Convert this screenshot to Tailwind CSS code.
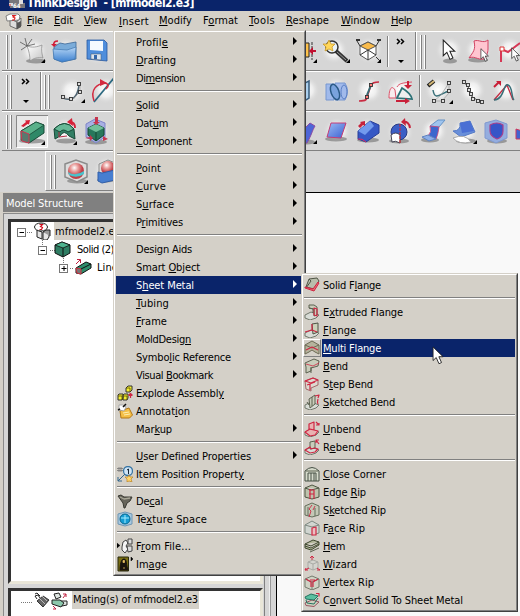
<!DOCTYPE html>
<html lang="en">
<head>
<meta charset="utf-8">
<title>ThinkDesign - [mfmodel2.e3]</title>
<script src="https://cdn.jsdelivr.net/npm/@tailwindcss/browser@4"></script>
</head>
<body class="overflow-hidden">
<svg class="absolute w-0 h-0" aria-hidden="true">
  <defs>
    <radialGradient id="glow"><stop offset="0" stop-color="#fff"/><stop offset=".5" stop-color="#f4f4f4" stop-opacity=".8"/><stop offset="1" stop-color="#d6d6d6" stop-opacity="0"/></radialGradient>
    <linearGradient id="blue" x1="0" y1="0" x2="1" y2="1"><stop offset="0" stop-color="#9cbcf4"/><stop offset="1" stop-color="#3b5fd0"/></linearGradient>
    <linearGradient id="folder" x1="0" y1="0" x2="0" y2="1"><stop offset="0" stop-color="#b5d5f5"/><stop offset="1" stop-color="#3b80d0"/></linearGradient>
    <radialGradient id="ball" cx=".4" cy=".3"><stop offset="0" stop-color="#fff"/><stop offset=".5" stop-color="#e89a98"/><stop offset="1" stop-color="#c04048"/></radialGradient>
    <linearGradient id="paper" x1="0" y1="0" x2="1" y2="1"><stop offset="0" stop-color="#fff"/><stop offset="1" stop-color="#c4c4c4"/></linearGradient>
    <symbol id="pointer" viewBox="0 0 14 22"><path d="M1 1V16L4.5 12.700L7.500 19.500L10.300 18.200L7.400 11.800H12Z" fill="#fff" stroke="#222" stroke-width="1"/></symbol>
  </defs>
</svg>
<div class="relative w-[520px] h-[616px] overflow-hidden flex flex-col bg-[#d4d0c8] text-[11px] leading-[20px] text-black whitespace-nowrap font-['DejaVu_Sans_Condensed','DejaVu_Sans',sans-serif]">

  <header class="h-[11px] shrink-0 bg-[#0a246a] overflow-hidden flex items-start pl-[8px]">
    <svg class="w-[18px] h-[11px] shrink-0" viewBox="8 0 18 11"><path d="M9 0h11v3h5v5h-15z" fill="#77777b"/><path d="M9 3h4v3H9zM19 0h4v4h-4z" fill="#ddd"/><path d="M10 4v2" stroke="#d33"/><text x="13" y="8" font-size="6" font-weight="bold" fill="#fff">64</text></svg>
    <b class="pl-px text-white text-[12px] leading-[14px] -mt-[4px]"><span data-w="166" data-bold>ThinkDesign&nbsp; - [mfmodel2.e3]</span></b>
  </header>

  <nav class="h-[20px] shrink-0 flex items-start" id="menubar">
    <svg class="w-[22px] h-[20px] ml-[5px] shrink-0" viewBox="5 11 22 20"><path d="M10 19l7 3v7l-7-3zM17 21l4-3v8l-4 3z" fill="#ddd" stroke="#555" stroke-width=".8"/><path d="M6 16l4-2h8l2 2-1 4-12 1z" fill="#fff" stroke="#666" stroke-width=".8"/><path d="M12 15.500h3l-2 1.500 2 1-1 2h-2" fill="none" stroke="#d22" stroke-width="1.200"/><path d="M17 23l4-2v6l-4 2z" fill="#555"/></svg>
  </nav>

  <div class="h-[161px] shrink-0 flex flex-col border-t border-t-white pl-[2px] bg-[#d6d6d6]" id="toolbars"></div>

  <main class="flex-1 flex min-h-0">
    <aside class="w-[264px] shrink-0 flex flex-col pt-px pl-[3px] bg-[#d4d0c8]">
      <h2 class="h-[19px] shrink-0 bg-[#808080] text-white pl-[3px] leading-[21px]"><span data-w="76">Model Structure</span></h2>
      <div class="mt-px flex-1 min-h-0 flex flex-col border-l border-t border-[#8a8a8a] pl-[4px] pt-[5px] bg-[#d6d6d6]">
        <section class="h-[365px] shrink-0 w-[255px] border-[3px] border-t-[#333] border-l-[#333] border-r-[#e9e6d8] border-b-[#e9e6d8] bg-white overflow-hidden">
          <div class="flex h-[18px]"><svg class="w-[43px] h-[18px] shrink-0" viewBox="11 222 43 18"><rect x="17.500" y="228.500" width="8" height="8" fill="#fff" stroke="#777"/><path d="M19.500 232.500h4.500" stroke="#000"/><path d="M27 232.500h6" stroke="#777" stroke-dasharray="1 1"/><path d="M37 230l5 2v7l-5-2zM43 232h6v5l-2 3h-4z" fill="#e6e6e6" stroke="#222"/><path d="M43 232l3-2h4v6" fill="#999" stroke="#222"/><ellipse cx="41" cy="227" rx="6.500" ry="4" fill="#fff" stroke="#222"/><path d="M39.500 224.500h3l-2 2 2 1-1 2h-2" stroke="#d01020" fill="none" stroke-width="1.200"/></svg><span class="bg-[#d4d0c8] pl-[1px] w-[70px]"><span data-w="65">mfmodel2.e3</span></span></div>
          <div class="flex h-[18px]"><svg class="w-[65px] h-[18px] shrink-0" viewBox="11 240 65 18"><path d="M42.500 240v6M50 250.500h5" stroke="#777" stroke-dasharray="1 1"/><rect x="38.500" y="246.500" width="8" height="8" fill="#fff" stroke="#777"/><path d="M40.500 250.500h4.500" stroke="#000"/><path d="M62 242l8 3v8l-7 4-8-4v-8z" fill="#2f7d63" stroke="#111"/><path d="M55 245l8 3 7-3-8-3z" fill="#4eb38f" stroke="#111" stroke-width=".8"/><path d="M63 248v9" stroke="#111"/></svg><span class="pl-[1px]"><span data-w="36">Solid (2)</span></span></div>
          <div class="flex h-[18px]"><svg class="w-[86px] h-[18px] shrink-0" viewBox="11 258 86 18"><path d="M63.500 258v6M70 268.500h4" stroke="#777" stroke-dasharray="1 1"/><rect x="59.500" y="264.500" width="8" height="8" fill="#fff" stroke="#777"/><path d="M61.500 268.500h5M64 266v5" stroke="#000"/><path d="M76 268l10-6 5 2v4l-10 6-5-1z" fill="#2f8c6b" stroke="#111"/><path d="M76 268l5 1v5l-4-1z" fill="#777" stroke="#d03040"/><path d="M81 269l10-5" stroke="#111"/><path d="M76 264l4-4M77 259.500h3.500V263" stroke="#c12040" fill="none"/></svg><span data-w="20">Line</span></div>
        </section>
        <section class="mt-[4px] h-[40px] shrink-0 w-[255px] border-[3px] border-b-0 border-t-[#333] border-l-[#333] border-r-[#e9e6d8] bg-white flex">
          <svg class="w-[61px] h-[22px] shrink-0" viewBox="11 590 61 22"><path d="M21 601.500h11" stroke="#777" stroke-dasharray="1 1"/><path d="M35 593l2-1 3 3M37 598l-2-3 3-1 2 3" stroke="#222" fill="none"/><path d="M37 600l6-5 6 4-6 7z" fill="#666" stroke="#333"/><path d="M39 597l6 6M42 595l5 5" stroke="#bbb"/><path d="M54 593l5-1 2 4-5 2zM61 600h6v4l-5 1z" fill="#dfe6e2" stroke="#222"/><path d="M52 599h8l4 3-3 4-9-3z" fill="#8bc8ac" stroke="#222"/><path d="M63 597l3-4m-3 0h3v3M56 608l-3-3m0 3h3" stroke="#c02040" fill="none"/></svg>
          <span class="bg-[#d4d0c8] h-[18px] leading-[18px] pl-[1px] w-[127px]"><span data-w="124">Mating(s) of mfmodel2.e3</span></span>
        </section>
      </div>
    </aside>
    <div class="w-[12px] shrink-0 bg-[#d6d6d6] border-l border-[#808080] flex"><i class="ml-[4px] w-[2px] bg-[#eee] border-r border-[#999]"></i></div>
    <div class="flex-1 border-t border-l border-black bg-[#f9f9f9]"></div>
  </main>

  <div role="menu" class="absolute left-[113px] top-[30px] w-[193px] h-[546px] bg-[#d4d0c8] border border-l-[#d4d0c8] border-t-[#d4d0c8] border-r-[#404040] border-b-[#404040]">
    <div class="h-full border border-l-white border-t-white border-r-[#808080] border-b-[#808080] px-px pt-px" id="insertItems"></div>
  </div>
  <div role="menu" class="absolute left-[301px] top-[273px] w-[217px] h-[339px] bg-[#d4d0c8] border border-l-[#d4d0c8] border-t-[#d4d0c8] border-r-[#404040] border-b-[#404040]">
    <div class="h-full border border-l-white border-t-white border-r-[#808080] border-b-[#808080] px-0 pt-px" id="sheetItems"></div>
  </div>
  <svg class="absolute left-[432px] top-[346px] w-[13px] h-[20px]" viewBox="0 0 14 22"><use href="#pointer" width="14" height="22"/></svg>
</div>

<script>
const mnemonic = t => t.replace(/&(.)/, '<u class="underline underline-offset-[1px] decoration-1">$1</u>');
const label = (t, w) => `<span data-w="${w}">${mnemonic(t)}</span>`;

// Menu bar: label, left edge, width
document.getElementById('menubar').insertAdjacentHTML('beforeend', [
  ['&File',27,15],['&Edit',54,18],['&View',84,22],['&Insert',119,29],['&Modify',159,32],['F&ormat',203,34],['&Tools',249,25],['&Reshape',286,42],['&Window',341,38],['&Help',391,20]
].map(([t,x,w],i,a) => {
  const next = a[i+1] ? a[i+1][1] : 520;
  return `<span class="shrink-0 ${t === '&Insert' ? 'pt-px' : 'pt-0'}" style="width:${next-x}px">${label(t,w)}</span>`;
}).join(''));

// Toolbars: every glyph is drawn in window coordinates, [left, width, markup]
const glow = (x,y,r=14) => `<circle cx="${x}" cy="${y}" r="${r}" fill="url(#glow)"/>`;
const tri = (x,y) => `<path d="M${x} ${y}v-4l-4 4z" fill="#000"/>`;
const grip = x => `<path d="M${x+.5} 3v34M${x+4.500} 3v34" stroke="#fff"/><path d="M${x+1.500} 3v34M${x+5.500} 3v34" stroke="#808080"/>`;
const more = x => `<path d="M${x} 7l2.500 2.500-2.500 2.500M${x+4} 7l2.500 2.500-2.500 2.500" stroke="#000" stroke-width="1.500" fill="none"/><path d="M${x+1} 28h6l-3 3z"/>`;
const end = (x, y0 = 0, y1 = 39) => `<path d="M${x+.5} ${y0}V${y1}" stroke="#808080"/><path d="M${x+1.500} ${y0}V${y1}" stroke="#fff"/>`;
const shadow = (x,y,w=10) => `<ellipse cx="${x}" cy="${y}" rx="${w}" ry="2.500" fill="#777" opacity=".65"/>`;
const square = (x,y,f='#ddd') => `<rect x="${x-1.500}" y="${y-1.500}" width="3" height="3" fill="${f}" stroke="#333" stroke-width=".9"/>`;
const rows = [
 [32, 38, [
  [2,16, grip(6)],
  [18,32, glow(34,19)+shadow(36,29)+'<path d="M27 14c5 2 10 1 15-1c-1 5 0 9 1 13c-5-1-9 0-13 3c0-5-1-10-3-15z" fill="url(#paper)" stroke="#888" stroke-width=".7"/><path d="M27 14l-7-4m7 4l-2-8m2 8l5-7m-5 7l-6 4m6-4l8-2" stroke="#555" stroke-width=".8"/>'+tri(45,31)],
  [50,32, glow(66,19)+'<path d="M54 15l6-4 5 1 11-2v17l-14 3-8-3z" fill="#7bacd9" stroke="#3c6795" stroke-width=".8"/><path d="M53 17l14 1 9-3-1 12-13 3-8-3z" fill="url(#folder)" stroke="#4077b0" stroke-width=".7"/><path d="M54 14c-1-4 1-5 4-5" fill="none" stroke="#d01c38" stroke-width="1.700"/><path d="M51 12l3 3 3-3z" fill="#d01c38"/>'],
  [82,31, glow(97,19)+'<path d="M87 8h17l3 3v18l-20-2z" fill="#4f8edc" stroke="#29589e" stroke-width=".8"/><path d="M90 9h13v10l-13-1z" fill="#f4faff"/><path d="M91 22h10v6l-10-1z" fill="#dce4ee" stroke="#456" stroke-width=".5"/><path d="M94 23h3v4h-3z" fill="#3567aa"/>'],
  [113,192,''],
  [305,15,'<path d="M302 11h7v14h-7z" fill="#ffc24a" stroke="#222"/><path d="M312 10v18" stroke="#333" stroke-dasharray="3 1"/><path d="M316 19h-5" stroke="#c01030" stroke-width="2"/><path d="M309 19l4-4v8z" fill="#c01030"/>'+tri(317,31)],
  [320,34, glow(334,18)+'<circle cx="332" cy="15" r="6" fill="#eaf3fa" stroke="#333" stroke-width="1.500"/><path d="M336 19l11 10" stroke="#333" stroke-width="4"/><path d="M337 20l9 8" stroke="#999"/><path d="M329 8l2 4 4 0-3 3 1 4-4-2-4 2 1-4-3-3h4z" fill="#ffd65a" stroke="#c19020" stroke-width=".7"/>'+tri(350,31)],
  [354,31, glow(369,18)+'<path d="M360 14l8-4 8 4v9l-8 5-8-5z" fill="#fff" stroke="#555"/><path d="M360 14l8-4 8 4-8 4z" fill="#f9bb4c" stroke="#555"/><path d="M368 18v10M360 23l8-5 8 5M360 14l-3-5M376 14l3-5M376 25l4 4" stroke="#333" fill="none"/><path d="M356 8h4M377 8h4" stroke="#333" stroke-width="2"/>'+tri(381,31)],
  [385,32, end(387,4,35)+more(397)+end(415)],
  [417,16, grip(420)],
  [433,30, glow(449,18)+shadow(450,29,7)+'<use href="#pointer" x="442" y="7" width="15" height="23"/>'],
  [463,31, glow(478,18)+shadow(478,28)+'<path d="M474 9c5-2 9 3 14-1v9c0 4-2 8-3 9c-5 4-10-3-16 0c4-6 7-8 5-17z" fill="#ffc5d0" stroke="#d04362"/><use href="#pointer" x="480" y="16" width="10" height="15"/>'],
  [494,26, glow(510,18)+'<path d="M501 30V17l7 3 12-9" fill="none" stroke="#d63856" stroke-width="2"/><path d="M500 15h4v4h-4z" fill="#fff" stroke="#d33"/><use href="#pointer" x="511" y="15" width="10" height="16"/>']
 ]],
 [72, 38, [
  [2,54, grip(6)+more(22)+end(40)+grip(44)],
  [56,32, glow(72,19)+'<path d="M63 26c10 4 14-1 16-12" fill="none" stroke="#4c6270" stroke-width="1.500"/><path d="M63 26l10 1 7-7V12" fill="none" stroke="#999" stroke-width=".7"/>'+square(63,25)+square(71,27)+square(80,20)+square(79,12)+tri(85,31)],
  [88,25, glow(106,18)+'<path d="M94 30l20-24" stroke="#2c6981" stroke-width="1.700"/><path d="M94 29c-4-12 3-17 11-18 4 1 4 3 1 6" fill="none" stroke="#d32a40" stroke-width="1.500"/><path d="M107 11l-7-4v7z" fill="#d32a40"/>'],
  [113,192,''],
  [305,15,glow(306,18)+'<path d="M303 12l6-3v17l-6 4z" fill="#acd0ee" stroke="#375c7c" stroke-width="1.500"/>'],
  [320,34,glow(336,18)+'<path d="M326 12h8v16h-8zM335 11h10q5 8 0 17h-10z" fill="#a1baeb" stroke="#7796cf"/><ellipse cx="335" cy="20" rx="4" ry="8" transform="rotate(-20 335 20)" fill="#7aa3dd" stroke="#2a5a86" stroke-width="1.500"/><ellipse cx="344" cy="20" rx="3" ry="7" fill="none" stroke="#5b80c5"/>'],
  [354,31,glow(369,18)+'<path d="M359 29c7 0 8-1 9-7l3-9c1-2 3-3 8-3" fill="none" stroke="#c92b42" stroke-width="1.700"/><path d="M367 23l4-10" stroke="#376c75" stroke-width="2"/>'+square(367,25,'#f77')+square(371,13,'#f77')],
  [385,32,glow(400,18)+'<path d="M389 26c0-10 3-13 6-8l1 8zM397 15c2-4 6-4 15-5" fill="#f8ecee" stroke="#dc5269"/><path d="M397 26l5-10c5 3 9 6 10 11z" fill="#eee" stroke="#2c7176" stroke-width="1.700"/><path d="M408 9v7" stroke="#c92039" stroke-width="2"/><path d="M404 13l4 4 4-4zM405 26l5 3-5 3zM396 28h10v2h-10z" fill="#c92039"/>'],
  [417,38,end(419,3,35)+glow(438,18)+'<path d="M428 14l6-5" stroke="#222" stroke-width="4"/><path d="M429 13l5-4" stroke="#d4b876" stroke-width="2"/><path d="M433 18c2 12 8 3 16 1" fill="none" stroke="#397079" stroke-width="1.500"/><path d="M434 29l7-6 8-12v10l-7 8z" fill="none" stroke="#999" stroke-width=".7"/>'+square(449,11)+square(449,19)+square(434,29)+square(443,29)+tri(453,32)],
  [455,35,glow(472,18)+'<path d="M463 10l5 4 2 9 7 5 5 1" fill="none" stroke="#555"/>'+square(464,10)+square(468,13)+square(469,18)+square(471,22)+square(473,27)+square(478,29)+square(482,30)],
  [490,30,glow(506,18)+'<path d="M494 28l13-15 6 15" fill="none" stroke="#c22a40" stroke-width="1.300"/><path d="M494 28c11-1 9-17 14-15s3 12 6 15" fill="none" stroke="#397079" stroke-width="1.500"/><path d="M494 15l5-5" stroke="#c91d36" stroke-width="2"/><path d="M496 9h5v5z" fill="#c91d36"/>']
 ]],
 [112, 38, [
  [2,14,grip(6)],
  [16,33,'<path d="M16.500 35V3.500H48" fill="none" stroke="#888"/><path d="M17 35.500H47.500V4" fill="none" stroke="#fff"/><rect x="17" y="4" width="30" height="31" fill="#e8e8e8"/>'+shadow(32,29,13)+'<path d="M21 19l15-9 8 3v8l-15 10-8-3z" fill="#2f8968" stroke="#174936"/><path d="M21 19l15-9 8 3-15 10z" fill="#59b18a" stroke="#174936" stroke-width=".8"/><path d="M21 19l8 3v9l-7-2z" fill="#597a6f" stroke="#d43752"/><path d="M21 14l5-4-1-1.500 5-.5-1 4.500-1.500-.5-4 3z" fill="#d52138"/>'+tri(45,33)],
  [49,33,glow(65,19)+shadow(66,29)+'<path d="M54 17q11-11 20 0l1 10-6-3q-5-7-9 0l-5 3z" fill="#337f65" stroke="#174936"/><path d="M54 17q11-11 20 0l-6 3q-5-4-8 0z" fill="#67b997" stroke="#174936"/><path d="M59 20v5l8-1" fill="none" stroke="#b22c45"/><path d="M75 16c0-4-2-6-5-6" fill="none" stroke="#d52138" stroke-width="2"/><path d="M72 6l-5 4 6 4z" fill="#d52138"/>'+tri(77,33)],
  [82,31,glow(97,19)+shadow(96,30,11)+'<path d="M86 12l9-5 10 4v14l-9 6-10-6z" fill="#a8b0e3" stroke="#7e84c8"/><path d="M88 16l8-4 8 4v7l-8 6-8-6z" fill="#28775b" stroke="#124731"/><path d="M88 16l8-4 8 4-8 4z" fill="#72bf9a"/><path d="M96 20v9" stroke="#124731"/><path d="M95 5h3v5h2l-4 3-3-3h2zM85 26l5-1v-2l3 3-3 3v-2zM108 27l-5-3 0 5z" fill="#c6354d"/>'],
  [113,192,''],
  [305,18,shadow(307,30,8)+'<path d="M303 18l7-7 5 3c-3 5-3 8-8 17h-4z" fill="#4d65d7" stroke="#8c4ba3"/>'+tri(317,32)],
  [323,31,glow(337,19)+shadow(336,27,11)+'<path d="M331 11h15l-5 15-14-1z" fill="url(#blue)" stroke="#c43c76"/>'],
  [354,32,glow(368,19)+shadow(368,28,11)+'<path d="M358 19l12-10 9 4v8l-13 9-8-3z" fill="#3658c5" stroke="#283d95"/><path d="M358 19l12-10 4 5-9 9z" fill="#739bed"/><path d="M358 27q4-1 8 3" stroke="#e02e61" fill="none"/><path d="M358 14l3-3-1-1 5-1 0 5-2-1-3 3z" fill="#c6243c"/>'],
  [386,32,glow(400,20)+shadow(399,29,10)+'<circle cx="399" cy="20" r="8" fill="#3c5fc6" stroke="#293b83"/><path d="M391 23q5-4 9 0v8q-5-3-8-1z" fill="#fff" stroke="#445"/><path d="M400 12v19" stroke="#d22" stroke-dasharray="3 1"/><path d="M403 10q6-1 7 6" fill="none" stroke="#c6243c" stroke-width="2"/><path d="M405 6l-4 4 5 4z" fill="#c6243c"/>'],
  [418,32,glow(434,19)+shadow(430,28,9)+'<path d="M430 14l8-6h7l-6 7z" fill="#9fc4ee" stroke="#6693c7"/><path d="M430 14l9 1q-1 8-3 12l-8-3q4-4 2-10z" fill="#3d66cd" stroke="#d04473" stroke-width=".8"/><path d="M422 25l6-2 8 4-7 2z" fill="#8caee8" stroke="#6084c0"/>'],
  [450,33,glow(465,19)+shadow(466,29,10)+'<path d="M460 11l10-2 5 11-14 5-8-6q8 0 7-8z" fill="#698fd9" stroke="#5479c5"/><path d="M460 11l10-2 4 10-12 2z" fill="#4a6fd4"/><path d="M453 26q12-5 18 4-12 3-18-4z" fill="#fff" stroke="#aaa"/>'+tri(477,32)],
  [483,30,shadow(497,29,10)+'<path d="M485 11l11-3 11 4v14l-11 5-11-5z" fill="#94addf" stroke="#8099d0"/><path d="M490 13q7-4 13 0v6q0 6-6 8-7-3-7-8z" fill="#3655c8" stroke="#a9408c" stroke-width="1.200"/>'],
  [513,7,'<path d="M516 17l6 2v8h-6z" fill="#4264d0" stroke="#d0365d"/>']
 ]],
 [152, 38, [
  [46,15,grip(50)],
  [61,31,glow(76,19)+shadow(77,29,10)+'<path d="M65 12l11-4 11 4v13l-10 5-12-5z" fill="#ddd" stroke="#8b8b8b" stroke-width="1.500"/><circle cx="76" cy="19" r="8" fill="url(#ball)"/><path d="M68 20q7 5 16-1v3q-7 5-15 1z" fill="#4ac2cc"/>'+tri(88,32)],
  [92,21,glow(107,18)+shadow(106,28,9)+'<path d="M99 12l9-4 7 3v15h-16z" fill="#ddd" stroke="#8b8b8b"/><circle cx="108" cy="16" r="7" fill="url(#ball)"/><path d="M98 20l4 1 13-3v10l-13 3-4-2z" fill="#477ed0" stroke="#315fa9"/>']
 ]]
];
document.getElementById('toolbars').innerHTML = rows.map(([y,h,cells],i) =>
 `<div class="flex shrink-0 overflow-hidden border-b border-b-[#808080] ${i ? 'border-t border-t-white' : 'border-t-0'} ${i === 3 ? 'ml-[43px] w-[220px] border-l border-l-white' : 'ml-0'}" style="height:${i === 0 ? 39 : 40}px">` +
 cells.map(([x,w,art]) => `<svg class="shrink-0 block" style="width:${w}px;height:${h}px" viewBox="${x} 0 ${w} ${h}">${art}</svg>`).join('') + `</div>`).join('');

// Menu glyphs, 16 x 16
const P = (d, f='#c9cdbb', s='#5c6250', w=1) => `<path d="${d}" fill="${f}" stroke="${s}" stroke-width="${w}" stroke-linejoin="round"/>`;
const red = (d, f='none', w=1.200) => P(d, f, '#cf2743', w);
const sheet = P('M1 11l6-3 8 3-3 3-6 2-5-2z','#d8dcd6','#72786c');
const block = P('M1 5l7-3 7 3v8l-7 3-7-3z','#cfd2c4','#737a6d') + P('M1 5l7 3 7-3M8 8v8','none','#737a6d');
const art = {
 explode: P('M1 10l1-1h4v4l-1 2H1zM6 10l1-1h4v4l-1 2H6z','#f5ef31','#333')+P('M9 3l2-2h4v4l-2 2H9z','#f5ef31','#333')+P('M1 11h4v4M6 11h4v4M9 3h4v4','none','#554b00',.8)+red('M13.500 13V8.500m-2 2l2-2 2 2'),
 note: P('M3 8l9-3 3.500 7-3 3-8.500 0z','#f4be45','#b27716')+P('M6 10l6-1m-5 3l6-1','none','#fff0b0')+P('M2 2l4 0 3 2-2 4-5-1z','#fff','#999',.8)+P('M9 1l-3 3M1 7l2-1','none','#111',1.500),
 itempos: P('M2 1v5M4 1v5M0 2.500h6M0 4.500h6','none','#777',.8)+`<circle cx="11" cy="5" r="4.500" fill="#cfe4f5" stroke="#3976a5" stroke-width="1.300"/>`+P('M10 4l1.500-1v5','none','#123')+P('M8 8l-7 7m0-4v4h4','none','#33668c')+P('M12 9l1 2h3l-2 2 1 3-3-1-2 1 0-3-2-2h3z','#ffd56a','#b98324',.7),
 decal: P('M1 3l3-1 3 2 8 0-2 4-3 2-2 5-1 0-1-5z','#66645a','#3a3a33')+P('M3 4l4 2 6-1','none','#a9a797',1.300),
 texture: P('M1 3l7-2 7 2v10l-7 2-7-2z','#a7c8df','#6f96b4')+`<circle cx="8" cy="8" r="5" fill="#169dd4" stroke="#096990"/>`+P('M4 7h8M8 4v8','none','#a5edff'),
 file: P('M0 5v5l3-2.500z','#000','#000',.3)+P('M6 4l3-2 2 3-2 3 2 3-3 4-3-3 0-3z','#f5f5f5','#444')+P('M11 1h4v5h-4zM10 8l5 0 0 5-4 1z','#ddd','#444'),
 image: P('M1 1h10.500v14H1z','#796d12','#28290c')+P('M3 14c0-5 1-11 4-11s2 6 4 11z','#18130c','#18130c')+P('M6 4.500h1.500v2H6zM6 12h2','#e1bb61','#e1bb61',.8)+P('M14 1v4l2-2z','#000','#000',.5),
 solid: P('M5 2l8-1 2 3-5 8-8-2z','#b9beac','#4e5344')+P('M5 2l2 2-5 7','none','#4e5344')+red('M1 10l8 2 5-7 1 1-5 8-9-3z','#e96d75',1),
 extruded: sheet+P('M5 1l5 0 3 2v8l-3 1V5L5 4z')+red('M10 4l3 1v7l-3-1z')+P('M5 4l4 1v4','none'),
 flange: sheet+P('M8 2l6-1v9l-5 2z','#cbd1b9','#4e5344')+red('M1 10l7-2V2M8 8l5 2'),
 multi: P('M1 5l7-4 7 4v9l-4-2-3-2-3 2-4 2z','#b5b39c','#6d6a55')+P('M1 5l7 3 7-3','none','#6d6a55')+red('M2 10l6-3 6 3','none',1.100),
 bend: P('M1 5l9-4 5 2-1 5-7 2v3l-5 2V9z')+red('M2 6l7 2 6-3', 'none', .8)+P('M7 9v6','none'),
 step: P('M1 5l8-3 5 2v5l-7 3v3l-5-2z','#ddd9d0','#a5676a')+red('M1 5l8-3 5 2-7 3zM3 9l8-3M6 8v6'),
 skbend: sheet+P('M5 5l6-4v9l-5 4z')+P('M8 3v9','none')+red('M11 2l4-1-1 3m0 1q-1 3 0 5','none')+P('M3 8l2 3','none'),
 unbend: sheet+red('M1 11l5-3 8 2-3 4-5 1zM5 8V3l5-2v8z','#e9b2b1')+red('M12 1l3 3m-3 0h3V2'),
 rebend: sheet+P('M6 3l5-1v7l-5 1z')+red('M1 11l5-3 1 2 4-1 3 1-3 3-5 1z','none')+red('M15 5l-3-4m0 3V1h3'),
 close: P('M1 5q7-7 14 0v10H1zM4 15V7h8v8M7 7v8M10 7v8','#d6dbcc','#465045')+P('M2 5h12','none'),
 edge: P('M1 4l7-3 7 3v9l-7 2-7-2zM1 4l6 2 8-2','#bec3ad','#4d5541')+red('M5 6h5v9M6 5v10M5 10h5'),
 skrip: P('M1 4l7-3 7 3v9l-7 2-7-2zM4 5v9M11 6v8','#c3c8b6','#656e5c')+red('M8 3l-3 4 2 2-2 6M11 4l-2 4','none',.9),
 face: P('M1 5l7-4 7 4v8l-7 2-7-2zM1 5l7 2 7-2','#d1d6d1','#7e8982')+red('M8 8l4-1v8H8z','#eabfc1'),
 hem: P('M1 6l8-4 6 2v3l-8 5-6-2zM1 6l6 2 8-4M1 8l6 2 8-4','#afb596','#414932')+P('M6 14l9-4','none'),
 wizard: P('M4 6l5-2 5 2v6l-5 2-5-2z','#d4d4cf','#a9aaa5')+P('M4 6l5 2 5-2M9 8v6','none','#a9aaa5')+red('M8 4V0M6 2l2-2 2 2M5 12l-4 2m1-2l-1 2h3M13 12l3 2m-3 0h3', 'none', 1),
 vertex: block+red('M2 5l5 3v5M14 5L9 8v5M6 6l5 0'),
 convert: P('M1 11l7-3 7 2-5 4.500-8-1z','#ced1bf','#9a5560')+P('M1 5l6-3 7 2-4 4-8-1z','#5bc0a0','#247360')+P('M2 8l1 3 7 1 4-6','none','#247360')+red('M12 1.500h3v3')
};
const icon = n => n ? `<svg class="w-4 h-4 shrink-0" viewBox="0 0 16 16">${art[n]}</svg>` : '';
const separator = '<div class="h-[9px] pt-[3px] px-px"><div class="h-[2px] border-t border-t-[#808080] border-b border-b-white"></div></div>';
const S = null;
const main = [['Profil&e',31,1],['&Drafting',39,1],['Di&mension',48,1],S,['&Solid',22,1],['Dat&um',31,1],['&Component',55,1],S,['&Point',24,1],['&Curve',29,1],['S&urface',37,1],['P&rimitives',46,1],S,['Desi&gn Aids',55,1],['Smart &Object',63,1],['S&heet Metal',57,1],['&Tubing',32,1],['&Frame',30,1],['MoldDesig&n',54,1],['Symbo&lic Reference',94,1],['Visual &Bookmark',76,1],['Explode Assembl&y',87,0,'explode'],['Annotat&ion',53,0,'note'],['Mar&kup',35,1],S,['&User Defined Properties',114,1],['Item Position Propert&y',107,0,'itempos'],S,['De&cal',26,0,'decal'],['Te&xture Space',70,0,'texture'],S,['F&rom File...',54,0,'file'],['Im&age',30,0,'image']];
document.getElementById('insertItems').innerHTML = main.map(m => !m ? separator :
 `<div class="h-[18px] flex items-start ${m[0] === 'S&heet Metal' ? 'bg-[#0a246a] text-white' : 'text-black'}"><span class="w-[20px] h-[18px] pl-px shrink-0 flex items-center">${icon(m[3])}</span>${label(m[0],m[1])}${m[2] ? '<svg class="ml-auto mr-[6px] w-[4px] h-[8px] mt-[4px]" viewBox="0 0 4 8"><path d="M0 0v8l4-4z" fill="currentColor"/></svg>' : ''}</div>`).join('');
const sub = [['Solid F&lange',57,'solid'],S,['E&xtruded Flange',79,'extruded'],['&Flange',32,'flange'],['&Multi Flange',57,'multi'],['&Bend',24,'bend'],['S&tep Bend',49,'step'],['&Sketched Bend',71,'skbend'],S,['&Unbend',37,'unbend'],['R&ebend',37,'rebend'],S,['&Close Corner',62,'close'],['Edge &Rip',42,'edge'],['S&ketched Rip',62,'skrip'],['F&ace Rip',41,'face'],['&Hem',21,'hem'],['&Wizard',33,'wizard'],['&Vertex Rip',50,'vertex'],['C&onvert Solid To Sheet Metal',139,'convert']];
document.getElementById('sheetItems').innerHTML = sub.map(m => !m ? separator :
 `<div class="h-[18px] flex"><span class="w-[18px] h-[18px] shrink-0 flex items-center justify-center ${m[2] === 'multi' ? 'border border-t-white border-l-white border-r-[#808080] border-b-[#808080]' : 'border-0'}">${icon(m[2])}</span><span class="ml-px pl-px flex-1 mr-px ${m[2] === 'multi' ? 'bg-[#0a246a] text-white' : 'text-black'}">${label(m[0],m[1])}</span></div>`).join('');

// Spread each label over its nominal width
const pen = document.createElement('canvas').getContext('2d');
document.querySelectorAll('[data-w]').forEach(e => {
  pen.font = ('bold' in e.dataset ? 'bold 12px' : '11px') + ' "DejaVu Sans Condensed", "DejaVu Sans", sans-serif';
  e.style.letterSpacing = ((+e.dataset.w + 1 - pen.measureText(e.textContent).width) / e.textContent.length).toFixed(3) + 'px';
});
</script>
</body>
</html>
